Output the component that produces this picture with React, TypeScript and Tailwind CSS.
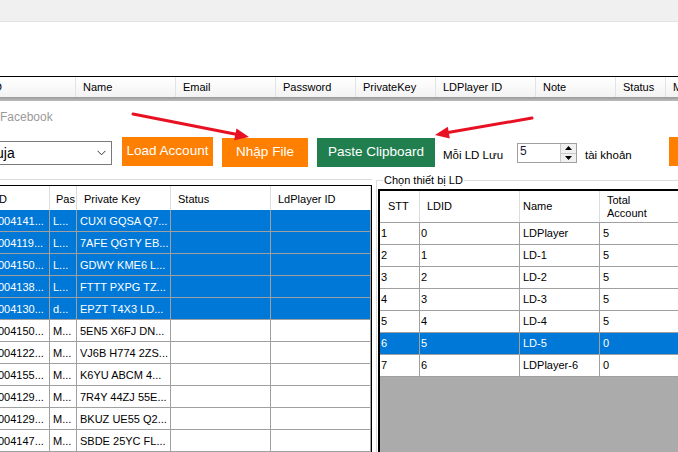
import React from 'react';

const accounts = [
  { id: '004141...', pass: 'L...', key: 'CUXI GQSA Q7...', sel: true },
  { id: '004119...', pass: 'L...', key: '7AFE QGTY EB...', sel: true },
  { id: '004150...', pass: 'L...', key: 'GDWY KME6 L...', sel: true },
  { id: '004138...', pass: 'L...', key: 'FTTT PXPG TZ...', sel: true },
  { id: '004130...', pass: 'd...', key: 'EPZT T4X3 LD...', sel: true },
  { id: '004150...', pass: 'M...', key: '5EN5 X6FJ DN...', sel: false },
  { id: '004122...', pass: 'M...', key: 'VJ6B H774 2ZS...', sel: false },
  { id: '004155...', pass: 'M...', key: 'K6YU ABCM 4...', sel: false },
  { id: '004129...', pass: 'M...', key: '7R4Y 44ZJ 55E...', sel: false },
  { id: '004129...', pass: 'M...', key: 'BKUZ UE55 Q2...', sel: false },
  { id: '004147...', pass: 'M...', key: 'SBDE 25YC FL...', sel: false },
];

const devices = [
  { stt: '1', ldid: '0', name: 'LDPlayer', total: '5', sel: false },
  { stt: '2', ldid: '1', name: 'LD-1', total: '5', sel: false },
  { stt: '3', ldid: '2', name: 'LD-2', total: '5', sel: false },
  { stt: '4', ldid: '3', name: 'LD-3', total: '5', sel: false },
  { stt: '5', ldid: '4', name: 'LD-4', total: '5', sel: false },
  { stt: '6', ldid: '5', name: 'LD-5', total: '0', sel: true },
  { stt: '7', ldid: '6', name: 'LDPlayer-6', total: '0', sel: false },
];

const topCols = [
  { label: 'Name', cls: 'w-[100px]' },
  { label: 'Email', cls: 'w-[100px]' },
  { label: 'Password', cls: 'w-[80px]' },
  { label: 'PrivateKey', cls: 'w-[80px]' },
  { label: 'LDPlayer ID', cls: 'w-[100px]' },
  { label: 'Note', cls: 'w-[80px]' },
  { label: 'Status', cls: 'w-[50px]' },
  { label: 'M', cls: 'w-[60px]' },
];

function TopHeader() {
  return (
    <div className="flex h-[20px] bg-gradient-to-b from-white to-[#f3f3f3] text-[11px] leading-[20px] text-black">
      <div className="w-[76px] shrink-0 overflow-hidden whitespace-nowrap border-r border-[#e3e3e3]">
        <span className="-ml-[6px] block">D</span>
      </div>
      {topCols.map((c) => (
        <div key={c.label} className={`${c.cls} shrink-0 overflow-hidden whitespace-nowrap border-r border-[#e3e3e3] pl-[7px]`}>
          {c.label}
        </div>
      ))}
    </div>
  );
}

function Toolbar() {
  return (
    <div className="flex h-[30px] items-start whitespace-nowrap">
      <div className="mt-[4px] flex h-[24px] w-[112px] shrink-0 items-center justify-between overflow-hidden border-y border-r border-[#7a7a7a] bg-white">
        <span className="-ml-[4px] text-[14px] text-black">uja</span>
        <svg width="9" height="6" viewBox="0 0 9 6" className="mr-[5px]">
          <polyline points="0.5,0.8 4.5,4.8 8.5,0.8" fill="none" stroke="#333" strokeWidth="1" />
        </svg>
      </div>
      <button className="ml-[10px] flex h-[29px] w-[91px] shrink-0 items-center justify-center bg-[#ff8000] text-[13.5px] text-white">
        Load Account
      </button>
      <button className="ml-[9px] mt-[1px] flex h-[29px] w-[86px] shrink-0 items-center justify-center bg-[#ff8000] text-[13.5px] text-white">
        Nhập File
      </button>
      <button className="ml-[9px] mt-[1px] flex h-[29px] w-[118px] shrink-0 items-center justify-center bg-[#217f4f] text-[13.5px] text-white">
        Paste Clipboard
      </button>
      <div className="ml-[8px] mt-[11px] w-[74px] shrink-0 text-[11.5px] leading-[14px] text-black">Mỗi LD Lưu</div>
      <div className="mt-[6px] flex h-[20px] w-[60px] shrink-0 border border-[#a0a0a0] bg-white">
        <div className="flex-1 pl-[2px] text-[12px] leading-[15px] text-[#1a1a40]">5</div>
        <div className="flex w-[16px] flex-col border-l border-[#c8c8c8]">
          <div className="flex flex-1 items-center justify-center border-b border-[#c8c8c8] bg-[#f0f0f0]">
            <svg width="7" height="4" viewBox="0 0 7 4"><polygon points="3.5,0 7,4 0,4" fill="#000" /></svg>
          </div>
          <div className="flex flex-1 items-center justify-center bg-[#f0f0f0]">
            <svg width="7" height="4" viewBox="0 0 7 4"><polygon points="0,0 7,0 3.5,4" fill="#000" /></svg>
          </div>
        </div>
      </div>
      <div className="ml-[8px] mt-[11px] w-[84px] shrink-0 text-[11.5px] leading-[14px] text-black">tài khoản</div>
      <div className="h-[29px] w-[12px] shrink-0 bg-[#ff8000]" />
    </div>
  );
}

function AccountGrid() {
  return (
    <div className="border-r border-t border-black bg-white text-[11px]">
      <div className="flex h-[24px] leading-[27px] text-black">
        <div className="w-[50px] shrink-0 overflow-hidden whitespace-nowrap border-r border-[#dcdcdc]">
          <span className="-ml-[4px] block">ID</span>
        </div>
        <div className="w-[27px] shrink-0 overflow-hidden whitespace-nowrap border-r border-[#dcdcdc] pl-[6px]">Pas</div>
        <div className="w-[94px] shrink-0 border-r border-[#dcdcdc] pl-[7px]">Private Key</div>
        <div className="w-[100px] shrink-0 border-r border-[#dcdcdc] pl-[7px]">Status</div>
        <div className="w-[100px] shrink-0 border-r border-[#dcdcdc] pl-[7px]">LdPlayer ID</div>
      </div>
      {accounts.map((a, i) => (
        <div
          key={i}
          className={`flex h-[22px] border-b border-[#a0a0a0] leading-[22px] ${a.sel ? 'bg-[#0078d7] text-white' : 'bg-white text-black'}`}
        >
          <div className="w-[50px] shrink-0 overflow-hidden whitespace-nowrap border-r border-[#a0a0a0]">
            <span className="-ml-[2px] block">{a.id}</span>
          </div>
          <div className="w-[27px] shrink-0 overflow-hidden whitespace-nowrap border-r border-[#a0a0a0] pl-[3px]">{a.pass}</div>
          <div className="w-[94px] shrink-0 overflow-hidden whitespace-nowrap border-r border-[#a0a0a0] pl-[3px]">{a.key}</div>
          <div className="w-[100px] shrink-0 border-r border-[#a0a0a0]" />
          <div className="w-[100px] shrink-0 border-r border-[#a0a0a0]" />
        </div>
      ))}
    </div>
  );
}

function DeviceGrid() {
  return (
    <div className="ml-[1px] mt-[2px] flex-1 border-l-2 border-t-2 border-black bg-[#ababab] text-[11px]">
      <div className="flex h-[32px] items-center border-b border-[#a0a0a0] bg-white leading-[13px] text-black">
        <div className="flex h-full w-[40px] shrink-0 items-center border-r border-[#dcdcdc] pl-[8px]">STT</div>
        <div className="flex h-full w-[100px] shrink-0 items-center border-r border-[#dcdcdc] pl-[7px]">LDID</div>
        <div className="flex h-full w-[80px] shrink-0 items-center border-r border-[#dcdcdc] pl-[3px]">Name</div>
        <div className="flex h-full flex-1 items-center pl-[7px]">
          Total
          <br />
          Account
        </div>
      </div>
      {devices.map((d) => (
        <div
          key={d.stt}
          className={`flex h-[22px] border-b border-[#a0a0a0] leading-[21px] ${d.sel ? 'bg-[#0078d7] text-white' : 'bg-white text-black'}`}
        >
          <div className="w-[40px] shrink-0 border-r border-[#a0a0a0] pl-[1px]">{d.stt}</div>
          <div className="w-[100px] shrink-0 border-r border-[#a0a0a0] pl-[1px]">{d.ldid}</div>
          <div className="w-[80px] shrink-0 border-r border-[#a0a0a0] pl-[3px]">{d.name}</div>
          <div className="flex-1 pl-[3px]">{d.total}</div>
        </div>
      ))}
    </div>
  );
}

function Arrows() {
  return (
    <svg className="pointer-events-none absolute left-0 top-0" width="678" height="452" viewBox="0 0 678 452">
      <line x1="133" y1="114" x2="236" y2="134.3" stroke="#e81123" strokeWidth="3" strokeLinecap="round" />
      <polygon points="249,137 234.1,140.2 236.5,128.4" fill="#e81123" />
      <line x1="532" y1="118" x2="448" y2="132.6" stroke="#e81123" strokeWidth="3" strokeLinecap="round" />
      <polygon points="435,135 447.8,126.7 449.8,138.5" fill="#e81123" />
    </svg>
  );
}

export default function App() {
  return (
    <div className="relative flex h-[452px] w-[678px] flex-col overflow-hidden bg-white font-['Liberation_Sans',Arial,sans-serif]">
      <div className="h-[22px] shrink-0 border-b border-[#e3e3e3] bg-[#f0f0f0]" />
      <div className="h-[54px] shrink-0 bg-white" />
      <div className="h-px shrink-0 bg-black" />
      <TopHeader />
      <div className="h-[4px] shrink-0 bg-gradient-to-b from-[#9a9a9a] to-[#bdbdbd]" />

      <div className="flex h-[36px] shrink-0 items-start pt-[8px]">
        <span className="text-[12px] leading-[16px] text-[#9a9a9a]">Facebook</span>
      </div>

      <Toolbar />

      <div className="flex min-h-0 flex-1">
        <div className="w-[372px] shrink-0 pt-[12px]">
          <div className="h-px bg-[#dcdcdc]" />
          <div className="h-[5px]" />
          <AccountGrid />
        </div>
        <div className="flex min-w-0 flex-1 flex-col pl-[4px] pt-[7px]">
          <fieldset className="flex min-w-0 flex-1 flex-col border-l border-t border-[#dcdcdc]">
            <legend className="ml-[6px] px-[1px] text-[11px] leading-[13px] text-black">Chọn thiết bị LD</legend>
            <DeviceGrid />
          </fieldset>
        </div>
      </div>

      <Arrows />
    </div>
  );
}
